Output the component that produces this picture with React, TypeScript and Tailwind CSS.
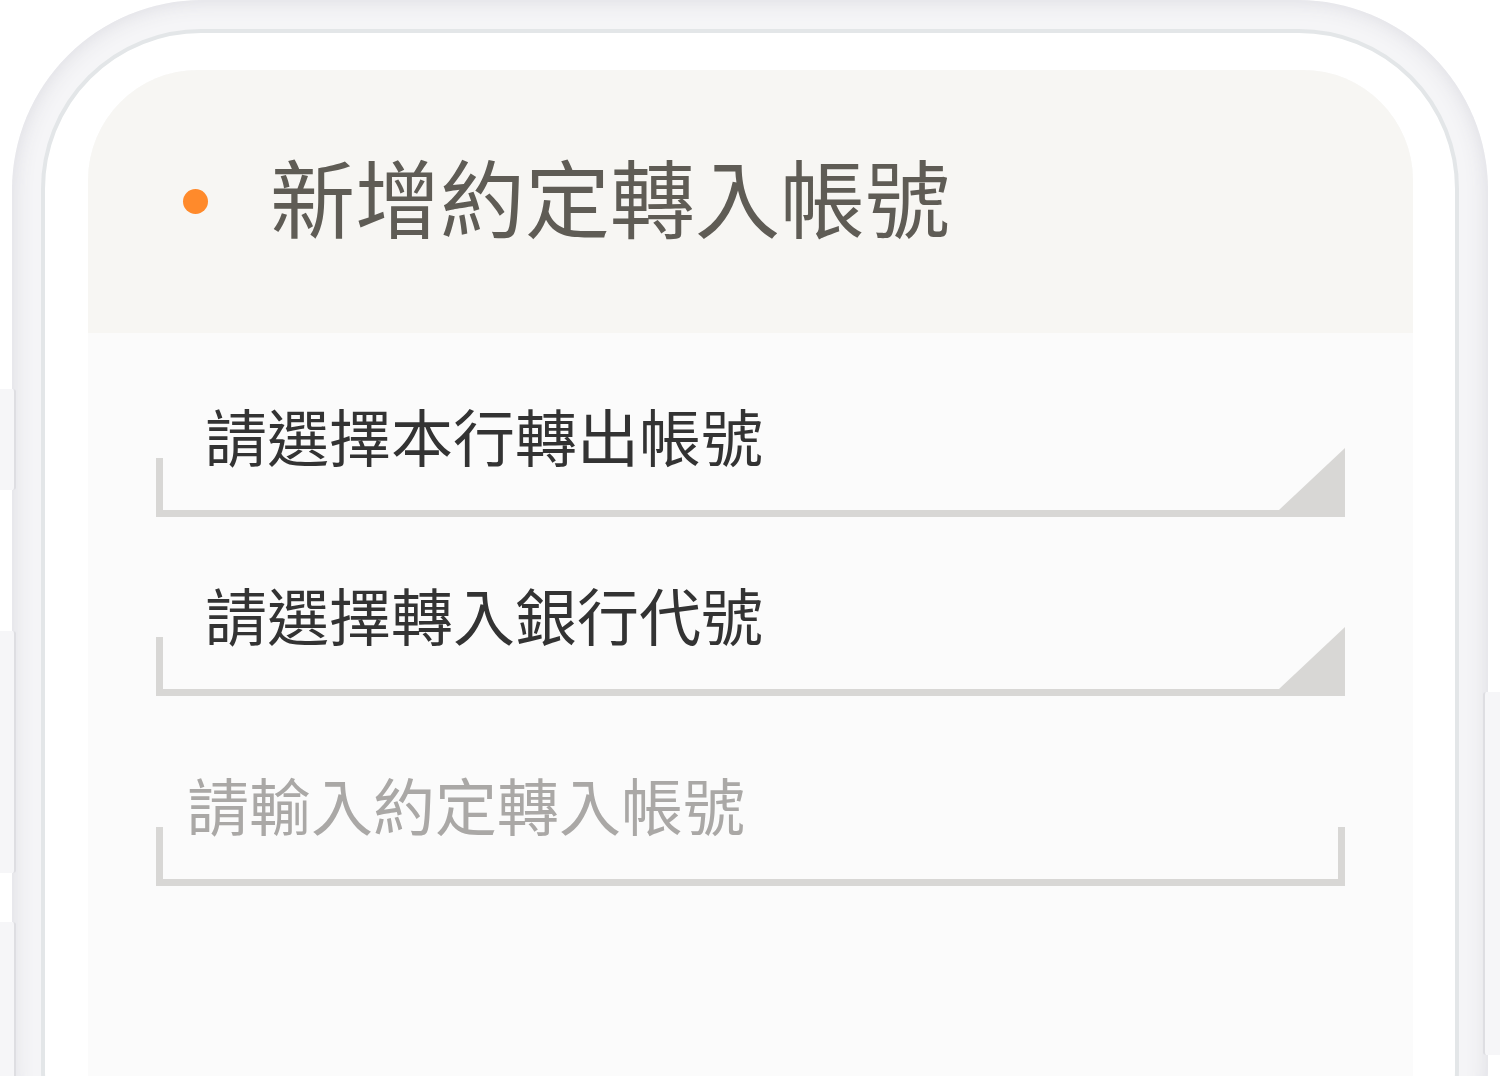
import React from "react";

const fieldFont = { fontFamily: '"Noto Sans CJK TC", "Noto Sans", sans-serif' };

const Corner: React.FC = () => (
  <svg
    className="absolute right-0 bottom-[-7px]"
    width="66"
    height="69"
    viewBox="0 0 66 69"
  >
    <polygon points="0,62 66,0 66,69 0,69" fill="#d8d7d5" />
  </svg>
);

type FieldProps = {
  label: string;
  placeholder?: boolean;
  select?: boolean;
};

const Field: React.FC<FieldProps> = ({ label, placeholder, select }) => (
  <div className="flex flex-col">
    <div
      className={`pb-[6px] text-[62px] leading-[68px] ${
        placeholder ? "pl-[31px] text-[#aaa8a6]" : "pl-[49px] text-[#333333]"
      }`}
      style={fieldFont}
    >
      {label}
    </div>
    <div
      className={`relative mt-[-17px] h-[59px] border-l-[7px] border-b-[7px] border-[#d8d7d5] ${
        select ? "" : "border-r-[7px]"
      }`}
    >
      {select && <Corner />}
    </div>
  </div>
);

export default function App() {
  return (
    <div className="relative h-[1076px] w-[1500px] overflow-hidden bg-white">
      {/* side buttons */}
      <div className="absolute left-0 top-[389px] h-[101px] w-[16px] rounded-r-[3px] border-r-2 border-[#dedee2] bg-[#f6f6f8]" />
      <div className="absolute left-0 top-[631px] h-[242px] w-[16px] rounded-r-[3px] border-r-2 border-[#dedee2] bg-[#f6f6f8]" />
      <div className="absolute left-0 top-[922px] h-[200px] w-[16px] rounded-r-[3px] border-r-2 border-[#dedee2] bg-[#f6f6f8]" />

      <div className="ml-[12px] w-[1476px] rounded-[190px] bg-[#f5f5f7] p-[29px] shadow-[inset_0_0_22px_#d9d9df]">
        <div className="h-[1200px] rounded-[160px] border-4 border-[#e3e6e8] bg-white pl-[43px] pr-[42px] pt-[37px]">
          <div className="h-full overflow-hidden rounded-t-[110px] bg-[#fbfbfb]">
            <div className="flex h-[263px] items-center bg-[#f7f6f3] pl-[95px]">
              <span className="h-[25px] w-[25px] rounded-full bg-[#ff8a2b]" />
              <span
                className="ml-[62px] mt-[-14px] text-[85px] leading-none text-[#5f5c55]"
                style={fieldFont}
              >
                新增約定轉入帳號
              </span>
            </div>
            <div className="flex flex-col gap-[63px] px-[68px] pt-[68px]">
              <Field label="請選擇本行轉出帳號" select />
              <Field label="請選擇轉入銀行代號" select />
              <div className="mt-[11px]">
                <Field label="請輸入約定轉入帳號" placeholder />
              </div>
            </div>
          </div>
        </div>
      </div>

      <div className="absolute right-0 top-[692px] h-[363px] w-[17px] rounded-l-[3px] border-l-2 border-[#dedee2] bg-[#f6f6f8]" />
    </div>
  );
}
